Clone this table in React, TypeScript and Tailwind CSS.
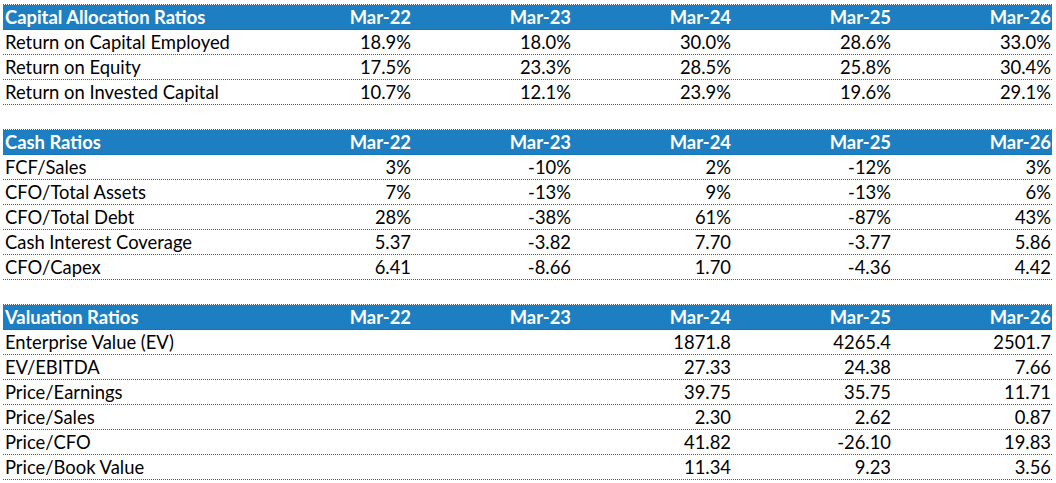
import React from 'react';

// One block of ratios, drawn like an Excel range
interface RatioTable {
  title: string;
  rows: { label: string; values: string[] }[];
}

const years = ['Mar-22', 'Mar-23', 'Mar-24', 'Mar-25', 'Mar-26'];

const tables: RatioTable[] = [
  {
    title: 'Capital Allocation Ratios',
    rows: [
      { label: 'Return on Capital Employed', values: ['18.9%', '18.0%', '30.0%', '28.6%', '33.0%'] },
      { label: 'Return on Equity', values: ['17.5%', '23.3%', '28.5%', '25.8%', '30.4%'] },
      { label: 'Return on Invested Capital', values: ['10.7%', '12.1%', '23.9%', '19.6%', '29.1%'] },
    ],
  },
  {
    title: 'Cash Ratios',
    rows: [
      { label: 'FCF/Sales', values: ['3%', '-10%', '2%', '-12%', '3%'] },
      { label: 'CFO/Total Assets', values: ['7%', '-13%', '9%', '-13%', '6%'] },
      { label: 'CFO/Total Debt', values: ['28%', '-38%', '61%', '-87%', '43%'] },
      { label: 'Cash Interest Coverage', values: ['5.37', '-3.82', '7.70', '-3.77', '5.86'] },
      { label: 'CFO/Capex', values: ['6.41', '-8.66', '1.70', '-4.36', '4.42'] },
    ],
  },
  {
    title: 'Valuation Ratios',
    rows: [
      { label: 'Enterprise Value (EV)', values: ['', '', '1871.8', '4265.4', '2501.7'] },
      { label: 'EV/EBITDA', values: ['', '', '27.33', '24.38', '7.66'] },
      { label: 'Price/Earnings', values: ['', '', '39.75', '35.75', '11.71'] },
      { label: 'Price/Sales', values: ['', '', '2.30', '2.62', '0.87'] },
      { label: 'Price/CFO', values: ['', '', '41.82', '-26.10', '19.83'] },
      { label: 'Price/Book Value', values: ['', '', '11.34', '9.23', '3.56'] },
    ],
  },
];

const rowClass =
  'grid grid-cols-[249px_repeat(5,160px)] h-[25px] items-end pb-[1px] border-b border-dotted border-[#5a5a5a]';

const App: React.FC = () => {
  return (
    <div
      className="bg-white w-[1056px] h-[483px] pt-[4px] pl-[3px] flex flex-col gap-[24px] text-[18.4px] leading-[22px] text-black"
      style={{ fontFamily: 'Lato, "Open Sans", sans-serif' }}
    >
      {tables.map((t) => (
        <div key={t.title} className="border-t border-dotted border-[#5a5a5a] w-[1049px]">
          {/* Header band */}
          <div className={`${rowClass} bg-[#1d7fc1] text-white font-bold`}>
            <div className="pl-[2px] whitespace-nowrap">{t.title}</div>
            {years.map((y) => (
              <div key={y} className="text-right pr-[1px]">{y}</div>
            ))}
          </div>
          {t.rows.map((r) => (
            <div key={r.label} className={rowClass}>
              <div className="pl-[2px] whitespace-nowrap">{r.label}</div>
              {r.values.map((v, i) => (
                <div key={i} className="text-right pr-[1px]">{v}</div>
              ))}
            </div>
          ))}
        </div>
      ))}
    </div>
  );
};

export default App;
